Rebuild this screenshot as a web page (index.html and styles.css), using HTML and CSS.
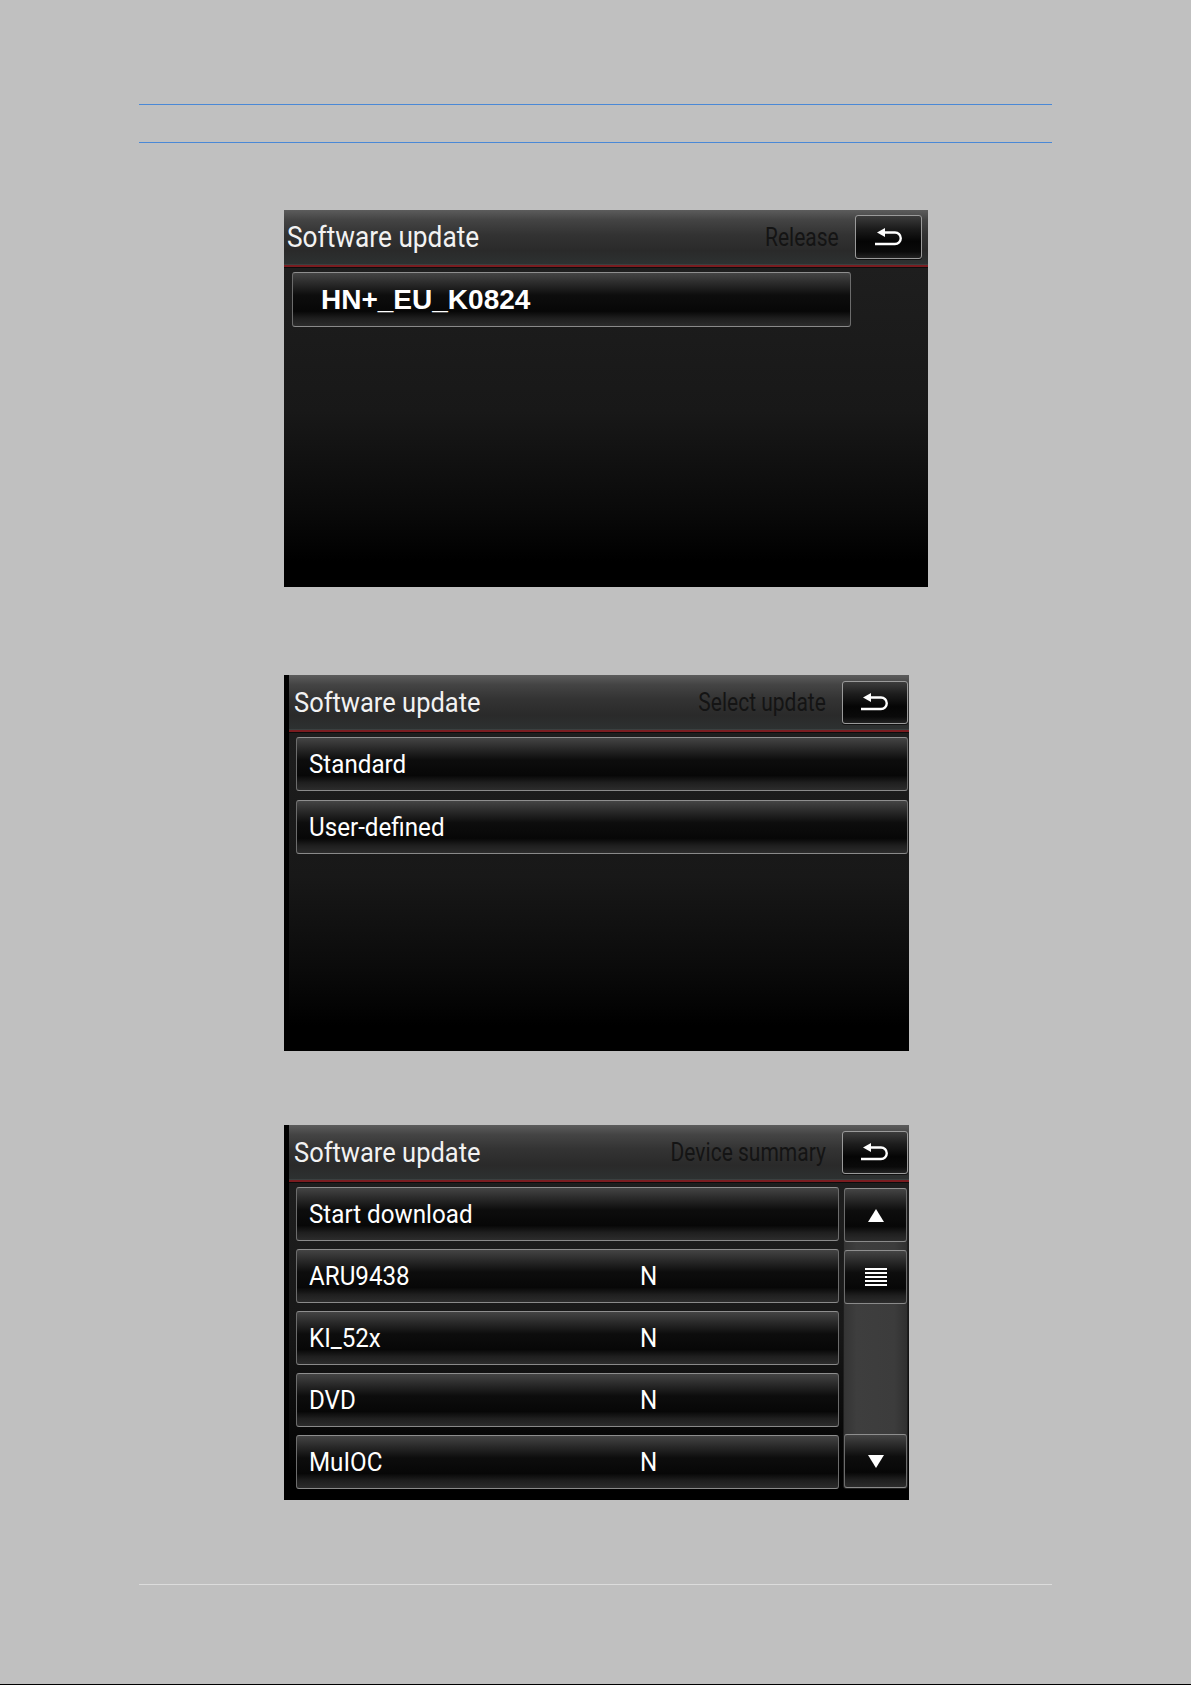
FILE: index.html
```html
<!DOCTYPE html>
<html lang="en">
<head>
<meta charset="utf-8">
<title>Software update</title>
<link rel="stylesheet" href="styles.css">
</head>
<body>
<div class="page">
  <div class="rule blue first"></div>
  <div class="rule blue second"></div>

  <section class="screen s1">
    <header class="head">
      <span class="title"><span class="tx">Software update</span></span>
      <span class="label"><span class="tx">Release</span></span>
      <button class="back" aria-label="Back">
        <svg width="30" height="18" viewBox="0 0 30 18"><path d="M1 16 H21 A5.75 5.75 0 0 0 21 4.5 H10" fill="none" stroke="#fff" stroke-width="2.4"/><polygon points="3,4.5 11,0 11,9" fill="#fff"/></svg>
      </button>
    </header>
    <div class="divider"></div>
    <div class="body">
      <div class="btn release-item">HN+_EU_K0824</div>
    </div>
  </section>

  <section class="screen s2">
    <header class="head">
      <span class="title"><span class="tx">Software update</span></span>
      <span class="label"><span class="tx">Select update</span></span>
      <button class="back" aria-label="Back">
        <svg width="30" height="18" viewBox="0 0 30 18"><path d="M1 16 H21 A5.75 5.75 0 0 0 21 4.5 H10" fill="none" stroke="#fff" stroke-width="2.4"/><polygon points="3,4.5 11,0 11,9" fill="#fff"/></svg>
      </button>
    </header>
    <div class="divider"></div>
    <div class="body list">
      <div class="btn row"><span class="tx">Standard</span></div>
      <div class="btn row"><span class="tx">User-defined</span></div>
    </div>
  </section>

  <section class="screen s3">
    <header class="head">
      <span class="title"><span class="tx">Software update</span></span>
      <span class="label"><span class="tx">Device summary</span></span>
      <button class="back" aria-label="Back">
        <svg width="30" height="18" viewBox="0 0 30 18"><path d="M1 16 H21 A5.75 5.75 0 0 0 21 4.5 H10" fill="none" stroke="#fff" stroke-width="2.4"/><polygon points="3,4.5 11,0 11,9" fill="#fff"/></svg>
      </button>
    </header>
    <div class="divider"></div>
    <div class="body split">
      <div class="list rows">
        <div class="btn row"><span class="tx">Start download</span></div>
        <div class="btn row dev"><span class="tx">ARU9438</span><span class="tx">N</span></div>
        <div class="btn row dev"><span class="tx">KI_52x</span><span class="tx">N</span></div>
        <div class="btn row dev"><span class="tx">DVD</span><span class="tx">N</span></div>
        <div class="btn row dev"><span class="tx">MuIOC</span><span class="tx">N</span></div>
      </div>
      <div class="scroll">
        <div class="btn sbtn"><svg width="16" height="13" viewBox="0 0 16 13"><polygon points="8,0 16,13 0,13" fill="#fff"/></svg></div>
        <div class="btn sbtn handle"><svg width="22" height="18" viewBox="0 0 22 18" fill="#fff"><rect y="0" width="22" height="2"/><rect y="4" width="22" height="2"/><rect y="8" width="22" height="2"/><rect y="12" width="22" height="2"/><rect y="16" width="22" height="2"/></svg></div>
        <div class="btn sbtn down"><svg width="16" height="13" viewBox="0 0 16 13"><polygon points="0,0 16,0 8,13" fill="#fff"/></svg></div>
      </div>
    </div>
  </section>

  <div class="rule light"></div>
  <div class="bottom-edge"></div>
</div>
</body>
</html>
```
FILE: styles.css
```css
* { box-sizing: border-box; }
html, body { margin: 0; padding: 0; }
body {
  background: #c0c0c0;
  font-family: Roboto, "Liberation Sans", Arial, sans-serif;
}
.page {
  width: 1191px;
  height: 1685px;
  display: flex;
  flex-direction: column;
  align-items: flex-start;
  overflow: hidden;
}
.rule { height: 1px; }
.rule.blue { background: #4a88d6; width: 913px; margin-left: 139px; }
.rule.first { margin-top: 104px; }
.rule.second { margin-top: 37px; }
.rule.light { background: #dcdcdc; width: 913px; margin-left: 139px; margin-top: 84px; }
.bottom-edge { width: 100%; height: 1px; background: #000; margin-top: 99px; }

.screen {
  margin-left: 284px;
  display: flex;
  flex-direction: column;
  background: #000;
}
.s1 { margin-top: 67px; width: 644px; height: 377px; }
.s2 { margin-top: 88px; width: 625px; height: 376px; border-left: 5px solid #000; }
.s3 { margin-top: 74px; width: 625px; height: 375px; border-left: 5px solid #000; }

.head {
  height: 54px;
  flex: none;
  display: flex;
  align-items: center;
  background: linear-gradient(to bottom, #5c5c5c 0%, #444 18%, #333 45%, #2a2a2a 75%, #2d3131 100%);
}
.tx { display: inline-block; white-space: nowrap; }
.title { flex: 1; color: #f2f2f2; padding-left: 5px; }
.title .tx { font-size: 28px; transform: scaleX(0.91); transform-origin: left center; }
.s1 .title { padding-left: 3px; }
.s1 .title .tx { font-size: 29.5px; transform: scaleX(0.89); }
.label { color: #141414; margin-right: 16px; }
.label .tx { font-size: 25px; transform: scaleX(0.84); transform-origin: right center; }
.back {
  width: 66px;
  height: 43px;
  margin-right: 1px;
  padding: 0;
  display: flex;
  align-items: center;
  justify-content: center;
  border: 1px solid #9a9a9a;
  border-radius: 3px;
  background: linear-gradient(to bottom, #3c3c3c 0%, #1c1c1c 30%, #050505 60%, #0a0a0a 85%, #222 100%);
  box-shadow: 0 1px 0 #111;
}
.s1 .back { width: 67px; height: 44px; margin-right: 6px; }

.divider {
  height: 4px;
  flex: none;
  background: linear-gradient(to bottom, #3a4040 0 25%, #7a1c20 25% 75%, #0c0c0c 75%);
}
.body {
  flex: 1;
  background: linear-gradient(to bottom, #1e1e1e 0%, #181818 45%, #0a0a0a 75%, #000 92%);
}

.btn {
  border: 1px solid #6c6c6c;
  border-top-color: #8e8e8e;
  border-bottom-color: #8a8a8a;
  border-radius: 3px;
  background: linear-gradient(to bottom, #444 0%, #2c2c2c 18%, #0d0d0d 42%, #070707 72%, #1f1f1f 86%, #2c2c2c 100%);
  color: #fff;
}

.s1 .body { padding: 4px 0 0 8px; }
.release-item {
  width: 559px;
  height: 55px;
  display: flex;
  align-items: center;
  padding-left: 28px;
  font-family: "Liberation Sans", Arial, sans-serif;
  font-weight: bold;
  font-size: 28px;
}

.list { display: flex; flex-direction: column; gap: 9px; }
.s2 .body { padding: 4px 1px 0 7px; }
.row {
  height: 54px;
  display: flex;
  align-items: center;
  padding-left: 12px;
}
.row .tx { font-size: 26px; transform: scaleX(0.93); transform-origin: left center; }

.split { display: flex; gap: 4px; padding: 4px 1px 11px 7px; }
.rows { width: 543px; gap: 8px; }
.rows .row { padding-left: 12px; }
.dev { display: grid; grid-template-columns: 331px 1fr; align-items: center; }

.scroll {
  width: 65px;
  display: flex;
  flex-direction: column;
  background: linear-gradient(to right, #343434, #3e3e3e 20%, #3c3c3c 80%, #303030);
  border-radius: 3px;
  border: 1px solid #1e1e1e;
}
.sbtn {
  height: 54px;
  flex: none;
  display: flex;
  align-items: center;
  justify-content: center;
}
.handle { margin-top: 8px; }
.down { margin-top: auto; }
```
